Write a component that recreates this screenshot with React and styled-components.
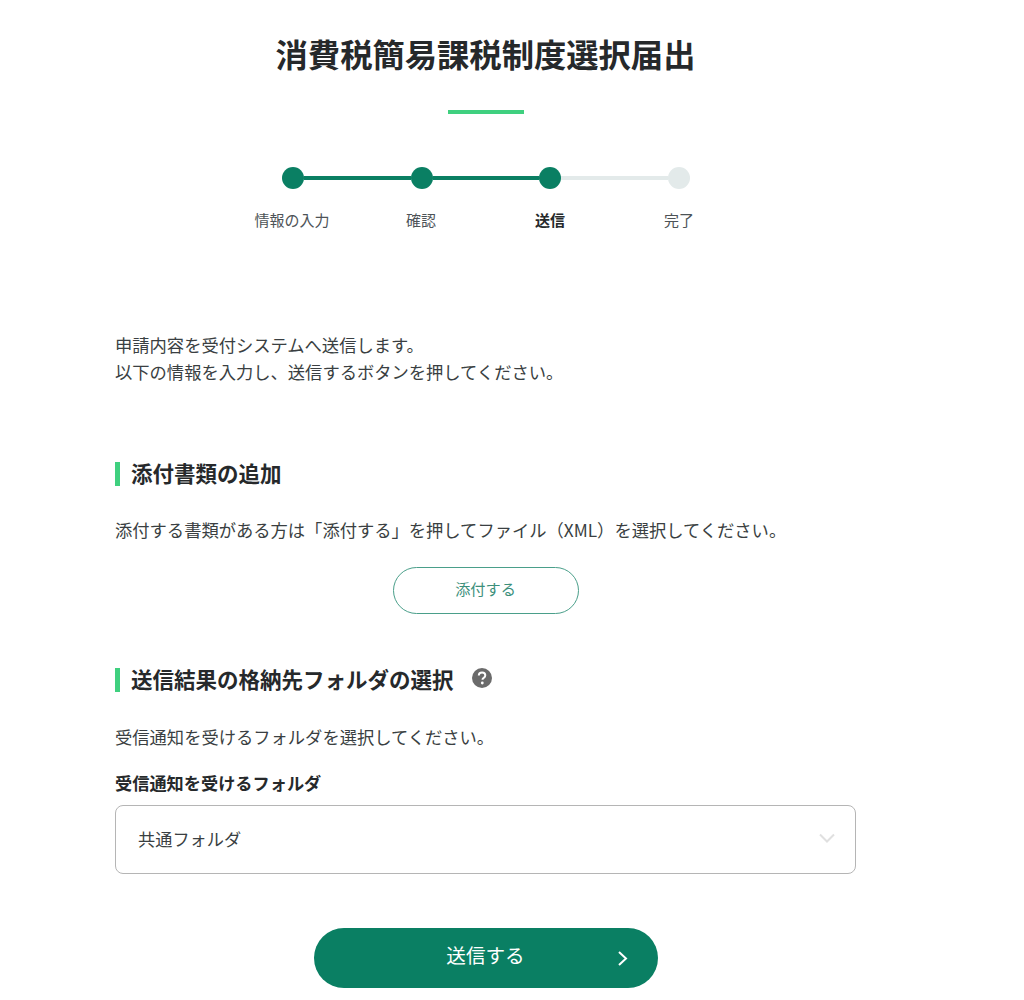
import React from "react"
import styled, { createGlobalStyle } from "styled-components"

const GlobalStyle = createGlobalStyle`
  html, body {
    margin: 0;
    background: #fff;
  }
  body {
    font-family: "Noto Sans CJK JP", "Noto Sans", sans-serif;
    color: #3a3f42;
  }
`

const Page = styled.main`
  width: 741px;
  margin-left: 115px;
  padding-top: 30px;
`

const Title = styled.h1`
  margin: 0;
  font-size: 32.3px;
  line-height: 46px;
  font-weight: 700;
  color: #26292b;
  text-align: center;
`

const TitleBar = styled.div`
  width: 76px;
  height: 4px;
  margin: 34px auto 0;
  background: #3fd07f;
`

const Track = styled.div`
  display: flex;
  align-items: center;
  width: 408px;
  margin: 53px 0 0 167px;
`

const Dot = styled.span`
  flex: none;
  width: 22px;
  height: 22px;
  border-radius: 50%;
  background: ${(p) => (p.$on ? "#0a7f63" : "#e3eaea")};
`

const Line = styled.span`
  flex: 1;
  height: 4px;
  background: ${(p) => (p.$on ? "#0a7f63" : "#e3eaea")};
`

const Labels = styled.div`
  display: grid;
  grid-template-columns: repeat(4, 129px);
  justify-content: center;
  margin-top: 20px;
`

const Label = styled.span`
  font-size: 15px;
  line-height: 22px;
  text-align: center;
  white-space: nowrap;
  font-weight: ${(p) => (p.$on ? 700 : 400)};
  color: ${(p) => (p.$on ? "#26292b" : "#4d5357")};
`

const Intro = styled.p`
  margin: 100px 0 0;
  font-size: 17.3px;
  line-height: 27px;
`

const Heading = styled.h2`
  display: flex;
  align-items: center;
  box-sizing: border-box;
  height: 24px;
  margin: ${(p) => p.$top}px 0 0;
  padding: 0 0 4px 11px;
  border-left: 5px solid #3fd07f;
  font-size: 21.5px;
  font-weight: 700;
  color: #26292b;
  white-space: nowrap;
`

const Help = styled.svg`
  width: 20px;
  height: 20px;
  margin-left: 18px;
  margin-top: -1px;
`

const Text = styled.p`
  margin: ${(p) => p.$top}px 0 0;
  font-size: 17.3px;
  line-height: 27px;
  white-space: nowrap;
`

const AttachButton = styled.button`
  display: block;
  width: 186px;
  height: 47px;
  margin: 24px auto 0;
  padding-bottom: 6px;
  border: 1px solid #4a9f8a;
  border-radius: 24px;
  background: #fff;
  color: #3c8f7b;
  font: 400 15.2px "Noto Sans CJK JP", sans-serif;
`

const FieldLabel = styled.div`
  margin-top: 21px;
  font-size: 17.2px;
  line-height: 24px;
  font-weight: 700;
  color: #26292b;
`

const Select = styled.div`
  display: flex;
  align-items: center;
  justify-content: space-between;
  box-sizing: border-box;
  height: 69px;
  margin-top: 10px;
  padding: 0 20px 3px 22px;
  border: 1px solid #b5b5b5;
  border-radius: 8px;
  font-size: 17.2px;
`

const SubmitButton = styled.button`
  display: flex;
  align-items: center;
  justify-content: center;
  position: relative;
  width: 344px;
  height: 60px;
  margin: 54px auto 0;
  padding-bottom: 9px;
  border: none;
  border-radius: 30px;
  background: #0a7f63;
  color: #fff;
  font: 400 19.6px "Noto Sans CJK JP", sans-serif;
`

const SubmitArrow = styled.svg`
  position: absolute;
  right: 29px;
  top: 22px;
  width: 12px;
  height: 17px;
`

export default function App() {
  return (
    <>
      <GlobalStyle />
      <Page>
        <Title>消費税簡易課税制度選択届出</Title>
        <TitleBar />

        <Track>
          <Dot $on />
          <Line $on />
          <Dot $on />
          <Line $on />
          <Dot $on />
          <Line />
          <Dot />
        </Track>
        <Labels>
          <Label>情報の入力</Label>
          <Label>確認</Label>
          <Label $on>送信</Label>
          <Label>完了</Label>
        </Labels>

        <Intro>
          申請内容を受付システムへ送信します。
          <br />
          以下の情報を入力し、送信するボタンを押してください。
        </Intro>

        <Heading $top={77}>添付書類の追加</Heading>
        <Text $top={30}>添付する書類がある方は「添付する」を押してファイル（XML）を選択してください。</Text>
        <AttachButton>添付する</AttachButton>

        <Heading $top={54}>
          送信結果の格納先フォルダの選択
          <Help viewBox="0 0 20 20">
            <circle cx="10" cy="10" r="10" fill="#6b6b6b" />
            <path
              d="M6.8 7.6c0-2 1.4-3.1 3.3-3.1 1.9 0 3.2 1.1 3.2 2.8 0 1.3-.7 2-1.6 2.6-.8.5-1.2.9-1.2 1.8"
              fill="none"
              stroke="#fff"
              strokeWidth="2"
            />
            <circle cx="10.3" cy="15" r="1.4" fill="#fff" />
          </Help>
        </Heading>
        <Text $top={31}>受信通知を受けるフォルダを選択してください。</Text>
        <FieldLabel>受信通知を受けるフォルダ</FieldLabel>
        <Select>
          共通フォルダ
          <svg width="16" height="10" viewBox="0 0 16 10" fill="none">
            <path d="M1 1.5l7 7 7-7" stroke="#e0e0e0" strokeWidth="2" />
          </svg>
        </Select>

        <SubmitButton>
          送信する
          <SubmitArrow viewBox="0 0 12 17" fill="none">
            <path d="M2 2l7 6.5L2 15" stroke="#fff" strokeWidth="2" />
          </SubmitArrow>
        </SubmitButton>
      </Page>
    </>
  )
}
